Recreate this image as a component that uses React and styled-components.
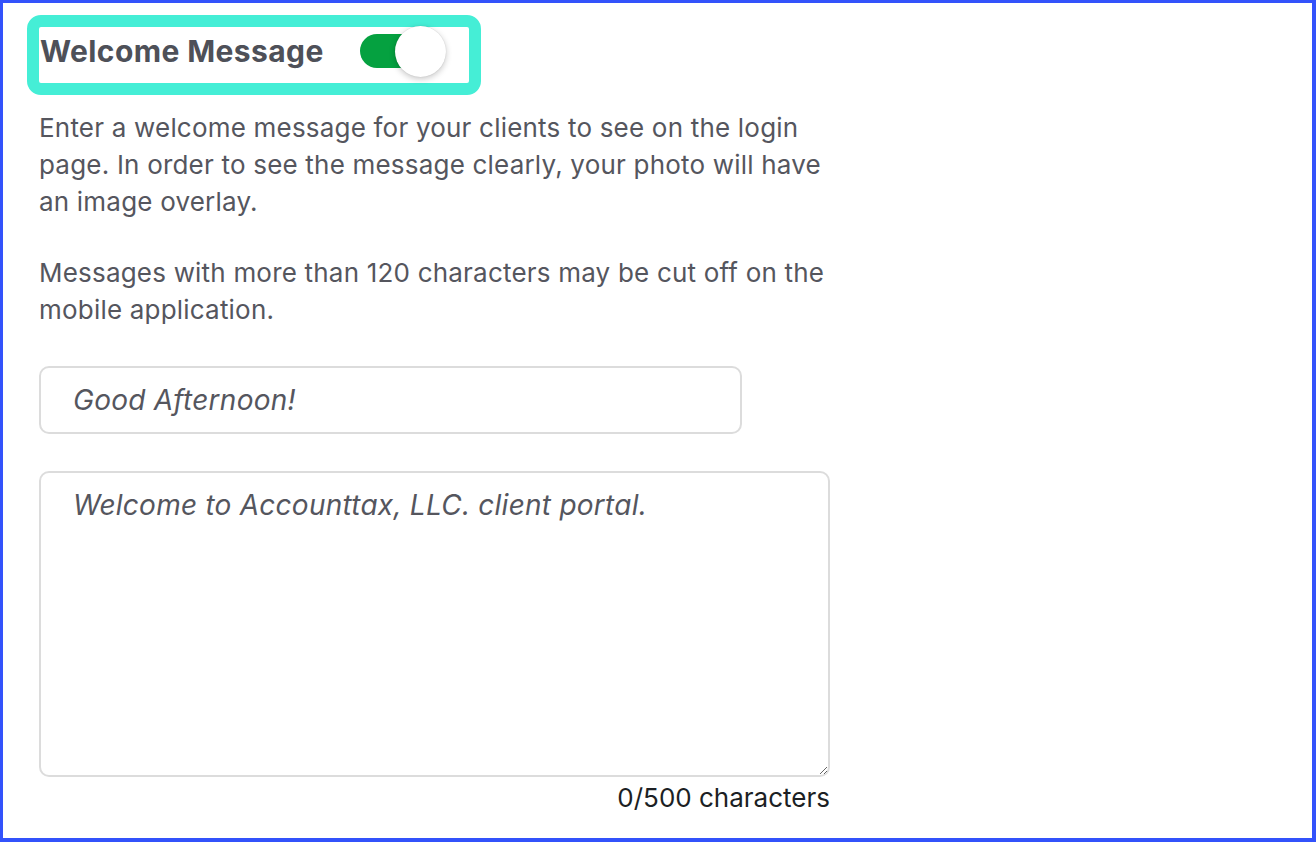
import styled, { createGlobalStyle } from 'styled-components';

const GlobalStyle = createGlobalStyle`
  html, body {
    margin: 0;
    padding: 0;
    background: #fff;
  }
  * {
    box-sizing: border-box;
  }
`;

const Page = styled.div`
  width: 1316px;
  height: 842px;
  border: solid #3352fb;
  border-width: 3px 4px 4px 3px;
  padding: 12px 0 0 24px;
  font-family: Inter, 'Noto Sans', sans-serif;
  background: #fff;
`;

const Highlight = styled.div`
  display: inline-flex;
  align-items: center;
  gap: 36px;
  height: 80px;
  padding: 0 24px 8px 1px;
  border: 12px solid #45eed6;
  border-radius: 14px;
`;

const Title = styled.h2`
  margin: 0;
  font-size: 30px;
  font-weight: 700;
  color: #4e5058;
  letter-spacing: 0.4px;
`;

const Track = styled.button`
  position: relative;
  width: 85px;
  height: 34px;
  padding: 0;
  border: none;
  border-radius: 17px;
  background: ${(p) => (p.$on ? '#05a140' : '#c9ccd2')};
  cursor: pointer;
`;

const Thumb = styled.span`
  position: absolute;
  top: 50%;
  left: ${(p) => (p.$on ? '35px' : '-2px')};
  width: 51px;
  height: 51px;
  margin-top: -25px;
  border-radius: 50%;
  background: #fff;
  box-shadow: 0 2px 6px rgba(0, 0, 0, 0.22), 0 0 1px rgba(0, 0, 0, 0.2);
`;

const Body = styled.div`
  width: 812px;
  padding: 14px 0 0 12px;
`;

const Text = styled.p`
  margin: 0 0 34px;
  font-size: 26px;
  line-height: 37px;
  letter-spacing: 0.2px;
  color: #55565e;
`;

const Field = styled.input`
  display: block;
  width: 703px;
  height: 68px;
  margin-top: 38px;
  padding: 0 32px;
  border: 2px solid #dcdcdc;
  border-radius: 10px;
  font-family: inherit;
  font-size: 28px;
  letter-spacing: 0.25px;
  color: #333;
  outline: none;

  &::placeholder {
    font-style: italic;
    color: #55565e;
  }
`;

const Area = styled.textarea`
  display: block;
  width: 791px;
  height: 306px;
  margin-top: 37px;
  padding: 16px 32px;
  border: 2px solid #dcdcdc;
  border-radius: 10px;
  font-family: inherit;
  font-size: 28px;
  line-height: 32px;
  letter-spacing: 0.25px;
  color: #333;
  outline: none;
  resize: vertical;

  &::placeholder {
    font-style: italic;
    color: #55565e;
  }
`;

const Counter = styled.div`
  width: 791px;
  margin-top: 5px;
  text-align: right;
  font-size: 26px;
  color: #1c1f24;
`;

export default function App() {
  return (
    <>
      <GlobalStyle />
      <Page>
        <Highlight>
          <Title>Welcome Message</Title>
          <Track type="button" $on aria-label="Toggle welcome message">
            <Thumb $on />
          </Track>
        </Highlight>
        <Body>
          <Text>
            Enter a welcome message for your clients to see on the login
            page. In order to see the message clearly, your photo will have
            an image overlay.
          </Text>
          <Text>
            Messages with more than 120 characters may be cut off on the
            mobile application.
          </Text>
          <Field placeholder="Good Afternoon!" />
          <Area placeholder="Welcome to Accounttax, LLC. client portal." />
          <Counter>0/500 characters</Counter>
        </Body>
      </Page>
    </>
  );
}
